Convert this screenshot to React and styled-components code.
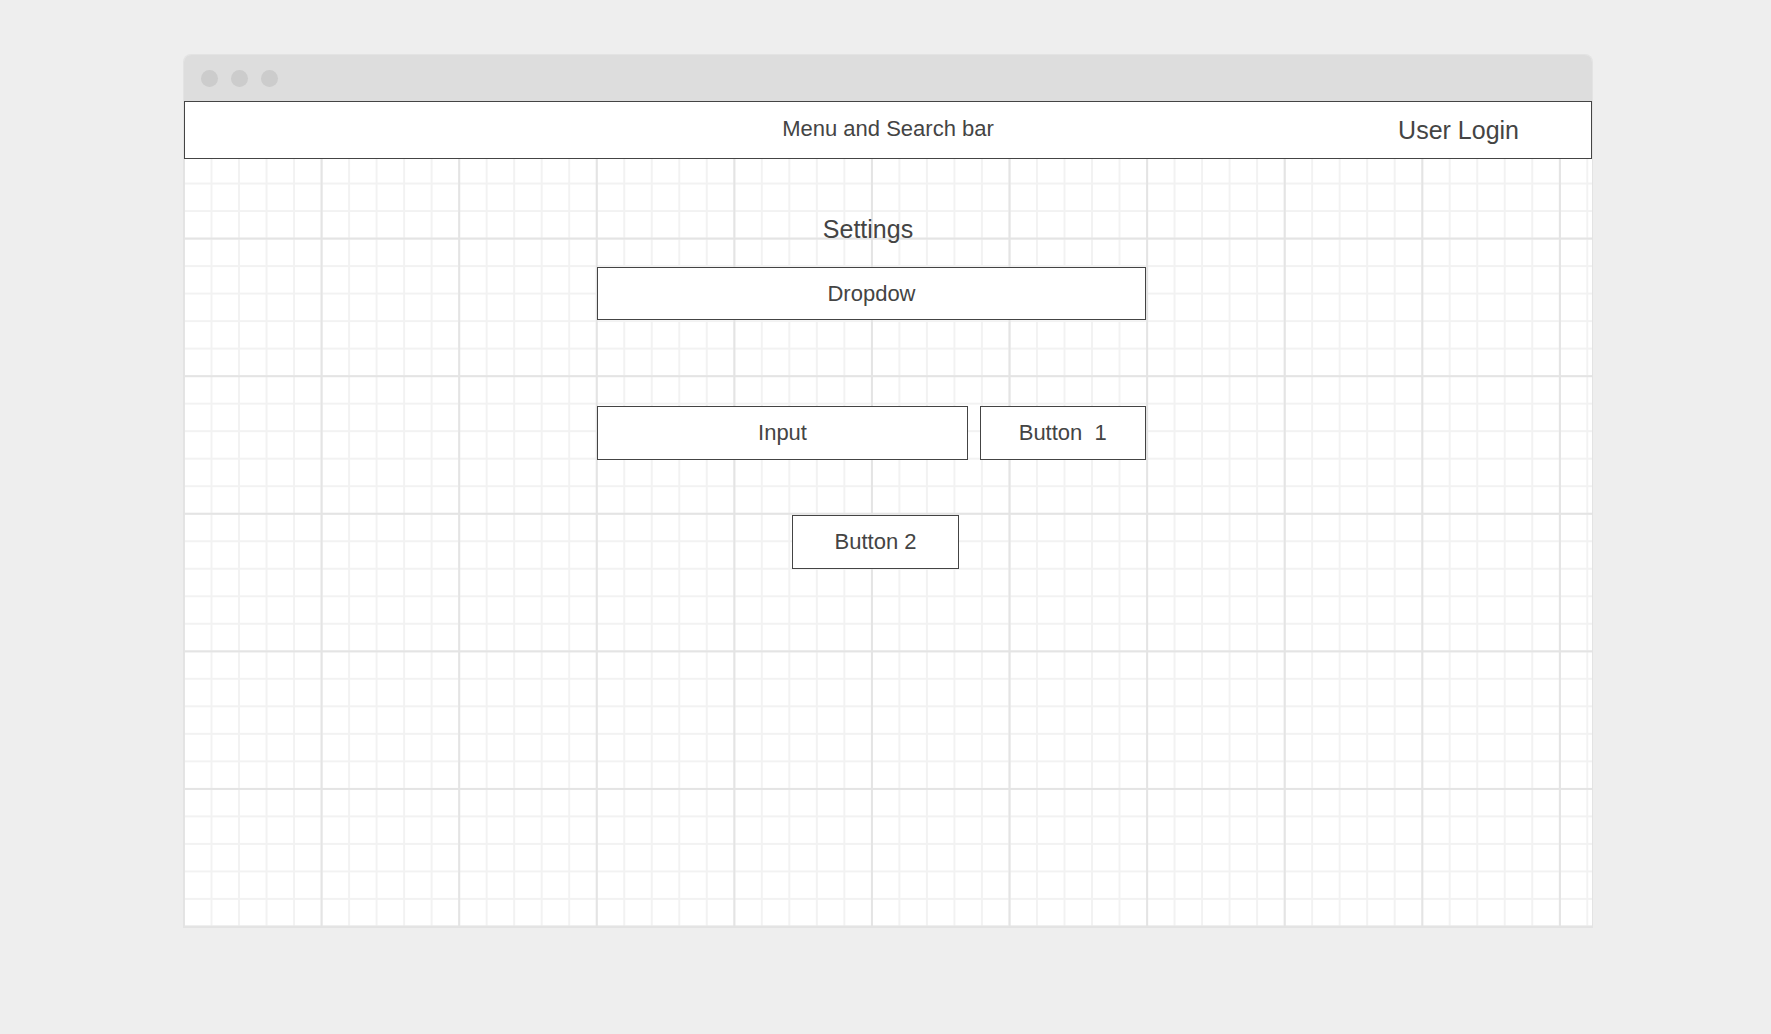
import React from "react";
import styled, { createGlobalStyle } from "styled-components";

const GlobalStyle = createGlobalStyle`
  html, body {
    margin: 0;
    padding: 0;
    background: #eeeeee;
  }
  body {
    font-family: "Liberation Sans", Arial, sans-serif;
    color: #444444;
  }
`;

export default function App() {
  return (
    <>
      <GlobalStyle />
      <Page>
        <Window>
          <TitleBar>
            <Dot />
            <Dot />
            <Dot />
          </TitleBar>
          <Body>
            <Header>
              <span />
              <MenuText>Menu and Search bar</MenuText>
              <LoginText>User Login</LoginText>
            </Header>
            <Column>
              <Title>Settings</Title>
              <Box $height={53}>Dropdow</Box>
              <Row>
                <Box $width={371}>Input</Box>
                <Box $width={166.5}>Button  1</Box>
              </Row>
              <Box $width={166.5} $center>Button 2</Box>
            </Column>
          </Body>
        </Window>
      </Page>
    </>
  );
}

const Page = styled.div`
  padding: 55px 0 0 184px;
  height: 1034px;
  box-sizing: border-box;
`;

const Window = styled.div`
  width: 1408px;
  height: 872px;
  display: flex;
  flex-direction: column;
  border-radius: 7px 7px 0 0;
  overflow: hidden;
  box-shadow: 0 0 0 1px #e3e3e3;
`;

const TitleBar = styled.div`
  height: 46px;
  flex: none;
  background: #dddddd;
  display: flex;
  align-items: center;
  gap: 13px;
  padding: 0 0 0 17px;
`;

const Dot = styled.div`
  width: 17px;
  height: 17px;
  border-radius: 50%;
  background: #cccccc;
`;

const Body = styled.div`
  flex: 1;
  background-color: #ffffff;
  background-image:
    linear-gradient(to right, #e4e4e4 1.5px, transparent 1.5px),
    linear-gradient(to bottom, #e4e4e4 1.5px, transparent 1.5px),
    linear-gradient(to right, #f2f2f2 1.5px, transparent 1.5px),
    linear-gradient(to bottom, #f2f2f2 1.5px, transparent 1.5px);
  background-size: 137.6px 137.6px, 137.6px 137.6px, 27.52px 27.52px, 27.52px 27.52px;
  background-position: -1px -1px;
  display: flex;
  flex-direction: column;
`;

const Header = styled.div`
  height: 58px;
  box-sizing: border-box;
  border: 1px solid #444444;
  background: #ffffff;
  display: grid;
  grid-template-columns: 1fr auto 1fr;
  align-items: center;
`;

const MenuText = styled.div`
  font-size: 22px;
  margin-top: -2px;
`;

const LoginText = styled.div`
  font-size: 25px;
  justify-self: end;
  padding-right: 72px;
`;

const Column = styled.div`
  width: 549px;
  margin: 55px 0 0 413px;
  display: flex;
  flex-direction: column;
`;

const Title = styled.div`
  font-size: 25px;
  line-height: 30px;
  text-align: center;
  margin: 0 7px 23px 0;
`;

const Row = styled.div`
  display: flex;
  gap: 11.5px;
  margin: 86px 0 55px;
`;

const Box = styled.div`
  box-sizing: border-box;
  width: ${(p) => (p.$width ? `${p.$width}px` : "100%")};
  height: ${(p) => p.$height || 54}px;
  border: 1px solid #444444;
  background: #ffffff;
  display: flex;
  align-items: center;
  justify-content: center;
  font-size: 22px;
  white-space: pre;
  align-self: ${(p) => (p.$center ? "center" : "auto")};
  margin-left: ${(p) => (p.$center ? "8px" : "0")};
`;
